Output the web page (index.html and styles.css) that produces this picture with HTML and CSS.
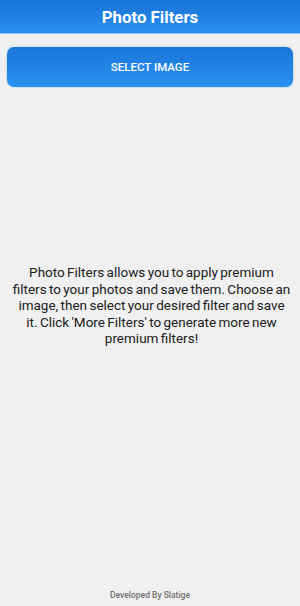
FILE: index.html
```html
<!DOCTYPE html>
<html lang="en">
<head>
  <meta charset="UTF-8" />
  <meta name="viewport" content="width=device-width, initial-scale=1.0"/>
  <title>Photo Filters</title>
  <link rel="stylesheet" href="styles.css">
</head>
<body>

  <!-- Header -->
  <header class="app-bar">
    <h1>Photo Filters</h1>
  </header>

  <!-- Main -->
  <main class="content">
    <button class="select-btn" type="button">SELECT IMAGE</button>

    <div class="intro">
      <p>Photo Filters allows you to apply premium filters to your photos and save them. Choose an image, then select your desired filter and save it. Click 'More Filters' to generate more new premium filters!</p>
    </div>
  </main>

  <footer class="footer">
    <p>Developed By Slatige</p>
  </footer>

</body>
</html>
```

FILE: styles.css
```css
* {
  margin: 0;
  padding: 0;
  box-sizing: border-box;
  font-family: Roboto, 'Noto Sans', sans-serif;
}

html, body {
  height: 100%;
}

body {
  background-color: #f0f0f0;
  color: #1e1e1e;
  display: flex;
  flex-direction: column;
}

/* Header */
.app-bar {
  height: 34px;
  background: linear-gradient(to bottom, #1873d6, #2a8ff0);
  border-bottom: 1px solid #8cc4f5;
  display: flex;
  align-items: center;
  justify-content: center;
}

.app-bar h1 {
  color: #fff;
  font-size: 16.8px;
  font-weight: bold;
}

/* Main */
.content {
  flex: 1;
  display: flex;
  flex-direction: column;
  padding: 13px 7px 0;
}

.select-btn {
  width: 100%;
  height: 40px;
  border: none;
  border-radius: 7px;
  background: linear-gradient(to bottom, #1a76d8, #2b91f2);
  color: #fff;
  font-size: 11.5px;
  font-weight: 500;
  box-shadow: 0 0 2px rgba(40, 130, 230, 0.5);
  cursor: pointer;
}

/* description sits at the middle of the screen */
.intro {
  flex: 1;
  display: flex;
  align-items: center;
  justify-content: center;
  margin: 0 -7px;
  padding: 0 0 66px 3px;
}

.intro p {
  width: 279px;
  text-align: center;
  font-size: 13.5px;
  line-height: 16.5px;
  word-spacing: -1px;
  color: #202020;
}

/* Footer */
.footer {
  text-align: center;
  padding: 0 0 6px;
}

.footer p {
  font-size: 8.5px;
  font-weight: 500;
  color: #707070;
}
```
